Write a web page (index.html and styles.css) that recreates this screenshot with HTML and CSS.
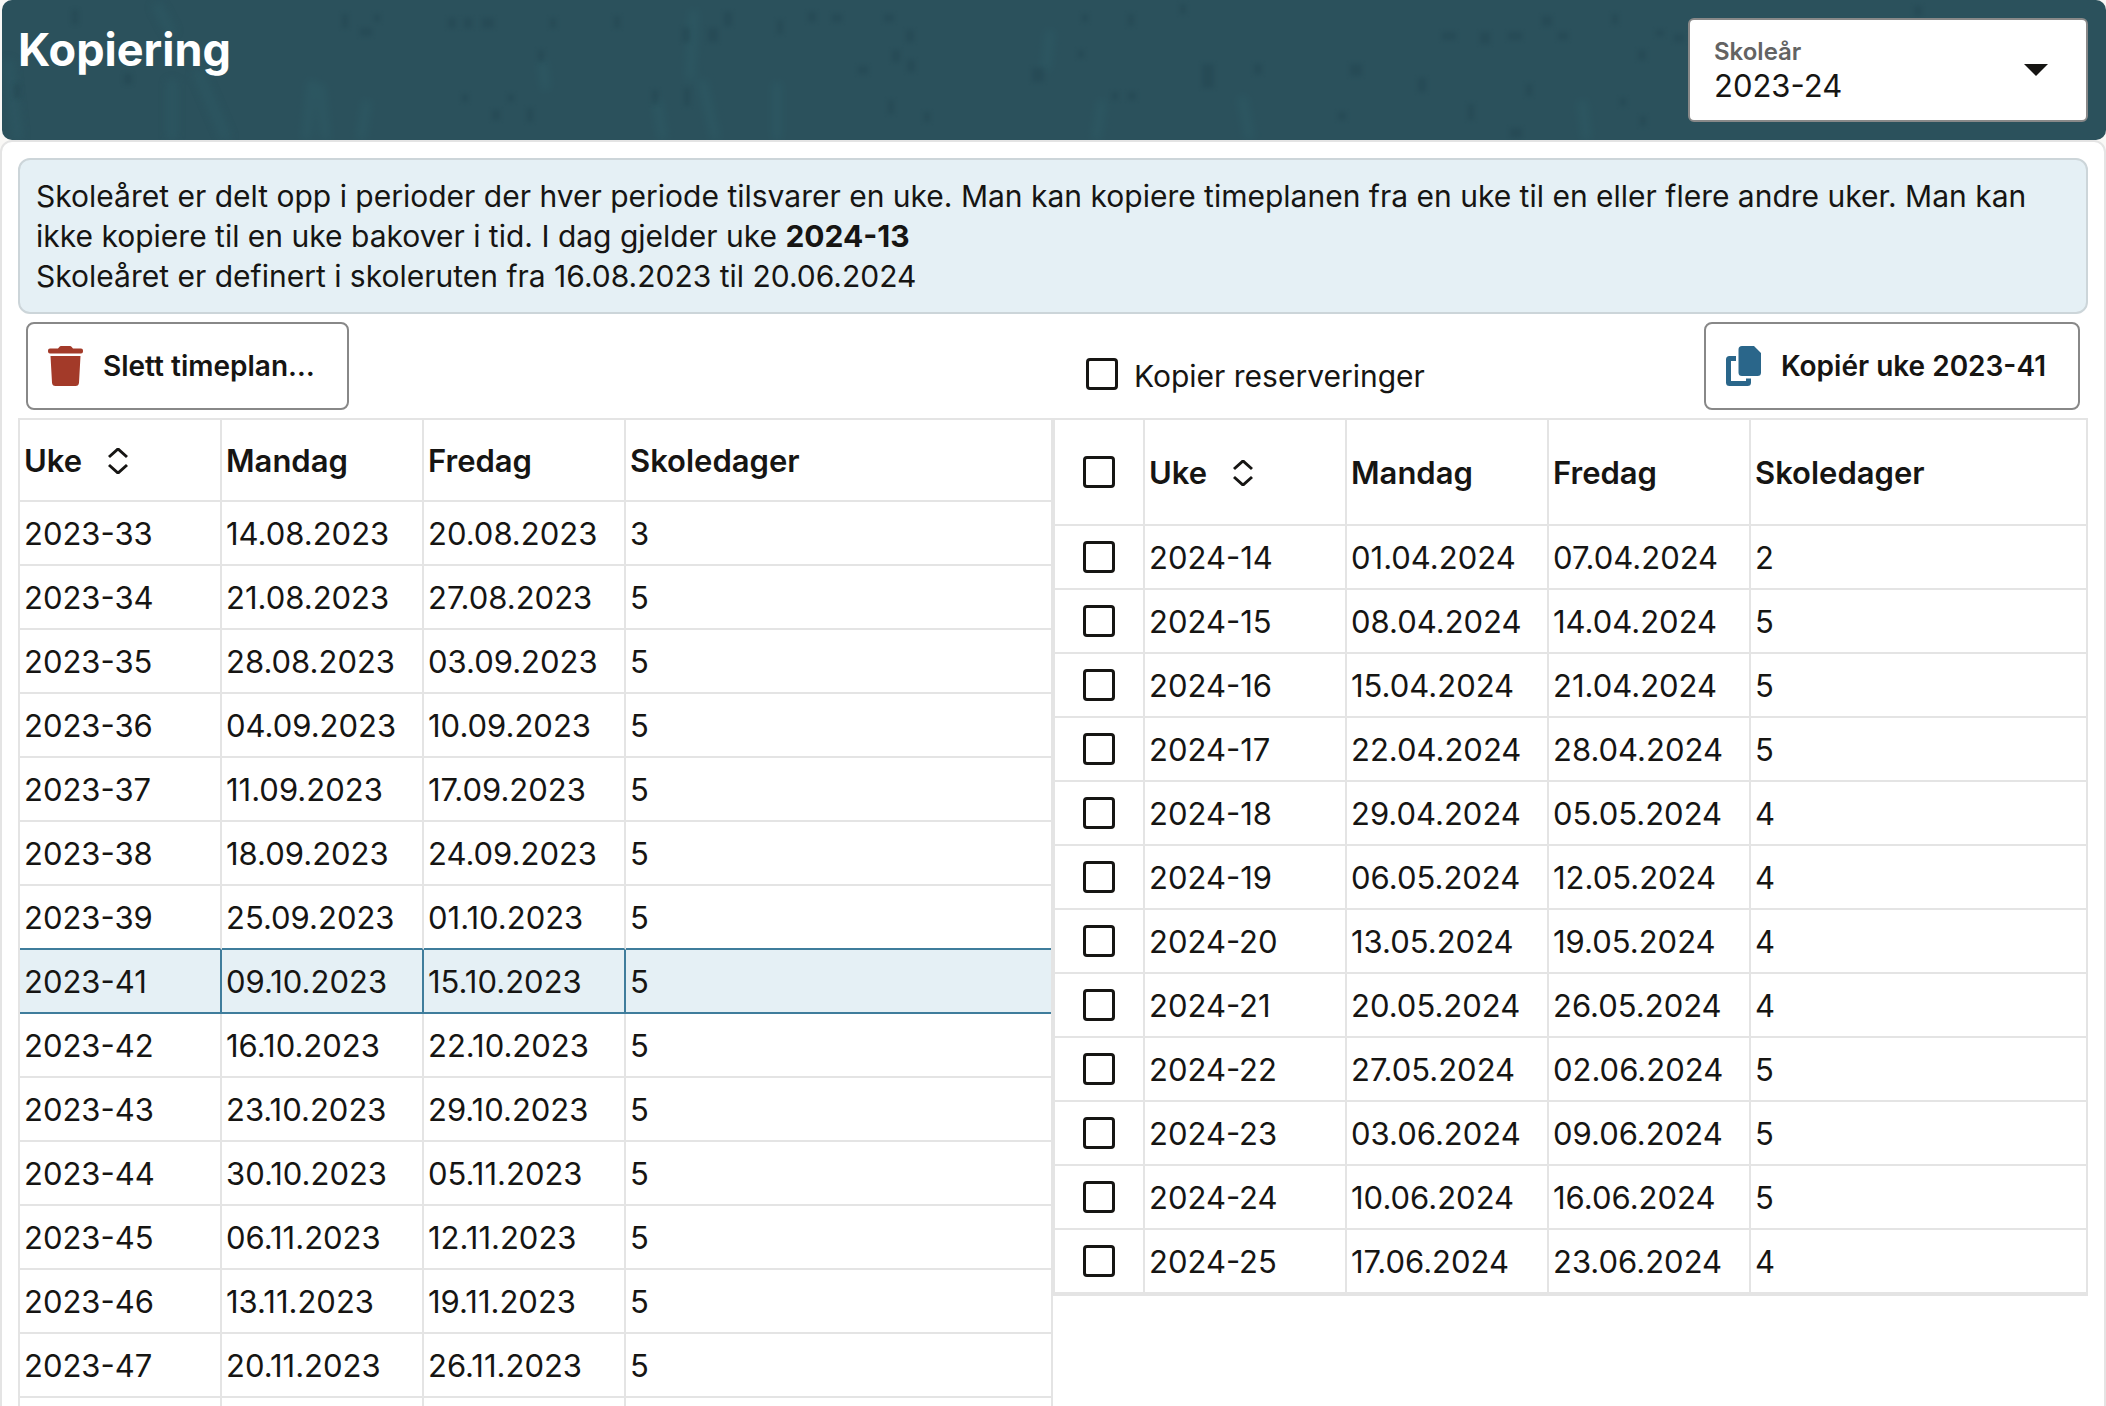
FILE: index.html
```html
<!DOCTYPE html>
<html lang="nb">
<head>
<meta charset="utf-8">
<meta name="viewport" content="width=device-width, initial-scale=1">
<title>Kopiering</title>
<link rel="stylesheet" href="styles.css">
</head>
<body>
<header class="page-header">
  <svg class="header-texture" viewBox="0 0 2104 140" preserveAspectRatio="none" aria-hidden="true">
    <g class="streaks">
      <path d="M6 60l10 80M154 4l16 30M170 80v60M195 70l30 70M310 80l-6 60M318 84l6 56M365 100l-6 40M540 60l4 30M655 100l6 40M692 10l-4 70M700 80l14 60M775 82v58M1100 100l-6 40M1240 96l8 44M1580 100l5 40M1048 30l-4 40"/>
    </g>
    <g class="specks">
      <path d="M70 10h6v14h-6zM122 74h8v10h-8zM12 84h6v14h-6zM340 14h6v14h-6zM358 28h12v8h-12zM372 14h6v8h-6zM446 18h8v10h-8zM462 18h8v10h-8zM480 18h12v10h-12zM548 18h6v10h-6zM612 16h6v12h-6zM536 50h6v12h-6zM680 28h8v14h-8zM706 28h10v14h-10zM722 12h8v14h-8zM775 20h6v14h-6zM806 12h8v10h-8zM830 14h10v8h-10zM882 14h10v8h-10zM904 30h8v12h-8zM890 50h8v12h-8zM856 66h10v8h-10zM905 60h8v12h-8zM886 100h6v14h-6zM922 112h6v10h-6zM525 108h6v14h-6zM490 110h8v10h-8zM506 94h6v8h-6zM460 94h6v8h-6zM650 90h6v14h-6zM682 88h6v18h-6zM1080 14h6v8h-6zM1126 14h6v12h-6zM1178 4h6v10h-6zM1076 50h6v8h-6zM1030 68h12v14h-12zM1110 92h6v8h-6zM1126 92h8v8h-8zM1200 64h12v24h-12zM1252 64h8v10h-8zM1348 64h12v12h-12zM1336 112h8v8h-8zM1440 32h14v8h-14zM1478 32h10v12h-10zM1506 32h14v8h-14zM1540 16h10v10h-10zM1556 32h10v8h-10zM1416 78h8v14h-8zM1524 84h6v12h-6zM1466 104h6v16h-6zM1508 128h12v10h-12zM1610 14h6v10h-6zM1654 30h8v6h-8zM1672 34h10v8h-10zM1636 50h8v10h-8zM1618 98h6v8h-6zM1638 116h6v10h-6zM1912 6h8v10h-8z"/>
    </g>
  </svg>
  <h1 class="page-title">Kopiering</h1>
  <div class="year-field">
    <label class="year-label" for="year">Skoleår</label>
    <select class="year-select" id="year"><option>2023-24</option></select>
    <svg class="year-arrow" viewBox="0 0 24 12" aria-hidden="true"><path d="M0 0h24L12 12z"/></svg>
  </div>
</header>

<main class="panel">
  <div class="info">
    <p class="info-text">Skoleåret er delt opp i perioder der hver periode tilsvarer en uke. Man kan kopiere timeplanen fra en uke til en eller flere andre uker. Man kan ikke kopiere til en uke bakover i tid. I dag gjelder uke <strong>2024-13</strong></p>
    <p class="info-text">Skoleåret er definert i skoleruten fra 16.08.2023 til 20.06.2024</p>
  </div>

  <div class="toolbar">
    <div class="toolbar-side">
      <button class="button" type="button">
        <svg class="button-icon icon-delete" viewBox="0 0 35 40" aria-hidden="true"><path d="M2 2.500H10L11.500.7Q12 0 13 0H22Q23 0 23.500.7L25 2.500H33Q35 2.500 35 4.500V5.500Q35 7.500 33 7.500H2Q0 7.500 0 5.500V4.500Q0 2.500 2 2.500ZM2.500 10H32.500L31 36.500Q30.800 40 27.500 40H7.500Q4.200 40 4 36.500Z"/></svg>
        Slett timeplan…
      </button>
    </div>
    <div class="toolbar-side toolbar-copy">
      <label class="copy-option"><input class="checkbox" type="checkbox"><span class="copy-text">Kopier reserveringer</span></label>
      <button class="button" type="button">
        <svg class="button-icon icon-copy" viewBox="0 0 35 40" aria-hidden="true"><path d="M16 0H28L35 7V26.500Q35 30 31.500 30H16Q12.500 30 12.500 26.500V3.500Q12.500 0 16 0ZM3.500 10H10V15H5V35H20V32.500H25V36.500Q25 40 21.500 40H3.500Q0 40 0 36.500V13.500Q0 10 3.500 10Z"/></svg>
        Kopiér uke 2023-41
      </button>
    </div>
  </div>

  <div class="tables">
    <div class="table-box">
      <table class="weeks">
        <colgroup><col class="col-data"><col class="col-data"><col class="col-data"><col></colgroup>
        <thead>
          <tr><th scope="col"><button class="sort" type="button">Uke<svg class="sort-icon" viewBox="0 0 20 26" aria-hidden="true"><path d="M1 9l9-8 9 8M1 17l9 8 9-8"/></svg></button></th><th scope="col">Mandag</th><th scope="col">Fredag</th><th scope="col">Skoledager</th></tr>
        </thead>
        <tbody>
          <tr><td>2023-33</td><td>14.08.2023</td><td>20.08.2023</td><td>3</td></tr>
          <tr><td>2023-34</td><td>21.08.2023</td><td>27.08.2023</td><td>5</td></tr>
          <tr><td>2023-35</td><td>28.08.2023</td><td>03.09.2023</td><td>5</td></tr>
          <tr><td>2023-36</td><td>04.09.2023</td><td>10.09.2023</td><td>5</td></tr>
          <tr><td>2023-37</td><td>11.09.2023</td><td>17.09.2023</td><td>5</td></tr>
          <tr><td>2023-38</td><td>18.09.2023</td><td>24.09.2023</td><td>5</td></tr>
          <tr><td>2023-39</td><td>25.09.2023</td><td>01.10.2023</td><td>5</td></tr>
          <tr class="is-selected"><td>2023-41</td><td>09.10.2023</td><td>15.10.2023</td><td>5</td></tr>
          <tr><td>2023-42</td><td>16.10.2023</td><td>22.10.2023</td><td>5</td></tr>
          <tr><td>2023-43</td><td>23.10.2023</td><td>29.10.2023</td><td>5</td></tr>
          <tr><td>2023-44</td><td>30.10.2023</td><td>05.11.2023</td><td>5</td></tr>
          <tr><td>2023-45</td><td>06.11.2023</td><td>12.11.2023</td><td>5</td></tr>
          <tr><td>2023-46</td><td>13.11.2023</td><td>19.11.2023</td><td>5</td></tr>
          <tr><td>2023-47</td><td>20.11.2023</td><td>26.11.2023</td><td>5</td></tr>
          <tr><td></td><td></td><td></td><td></td></tr>
        </tbody>
      </table>
    </div>
    <div class="table-box">
      <table class="weeks weeks-target">
        <colgroup><col class="col-check"><col class="col-data"><col class="col-data"><col class="col-data"><col></colgroup>
        <thead>
          <tr><th scope="col"><input class="checkbox" type="checkbox" aria-label="Velg alle"></th><th scope="col"><button class="sort" type="button">Uke<svg class="sort-icon" viewBox="0 0 20 26" aria-hidden="true"><path d="M1 9l9-8 9 8M1 17l9 8 9-8"/></svg></button></th><th scope="col">Mandag</th><th scope="col">Fredag</th><th scope="col">Skoledager</th></tr>
        </thead>
        <tbody>
          <tr><td><input class="checkbox" type="checkbox" aria-labelledby="w14"></td><td id="w14">2024-14</td><td>01.04.2024</td><td>07.04.2024</td><td>2</td></tr>
          <tr><td><input class="checkbox" type="checkbox" aria-labelledby="w15"></td><td id="w15">2024-15</td><td>08.04.2024</td><td>14.04.2024</td><td>5</td></tr>
          <tr><td><input class="checkbox" type="checkbox" aria-labelledby="w16"></td><td id="w16">2024-16</td><td>15.04.2024</td><td>21.04.2024</td><td>5</td></tr>
          <tr><td><input class="checkbox" type="checkbox" aria-labelledby="w17"></td><td id="w17">2024-17</td><td>22.04.2024</td><td>28.04.2024</td><td>5</td></tr>
          <tr><td><input class="checkbox" type="checkbox" aria-labelledby="w18"></td><td id="w18">2024-18</td><td>29.04.2024</td><td>05.05.2024</td><td>4</td></tr>
          <tr><td><input class="checkbox" type="checkbox" aria-labelledby="w19"></td><td id="w19">2024-19</td><td>06.05.2024</td><td>12.05.2024</td><td>4</td></tr>
          <tr><td><input class="checkbox" type="checkbox" aria-labelledby="w20"></td><td id="w20">2024-20</td><td>13.05.2024</td><td>19.05.2024</td><td>4</td></tr>
          <tr><td><input class="checkbox" type="checkbox" aria-labelledby="w21"></td><td id="w21">2024-21</td><td>20.05.2024</td><td>26.05.2024</td><td>4</td></tr>
          <tr><td><input class="checkbox" type="checkbox" aria-labelledby="w22"></td><td id="w22">2024-22</td><td>27.05.2024</td><td>02.06.2024</td><td>5</td></tr>
          <tr><td><input class="checkbox" type="checkbox" aria-labelledby="w23"></td><td id="w23">2024-23</td><td>03.06.2024</td><td>09.06.2024</td><td>5</td></tr>
          <tr><td><input class="checkbox" type="checkbox" aria-labelledby="w24"></td><td id="w24">2024-24</td><td>10.06.2024</td><td>16.06.2024</td><td>5</td></tr>
          <tr><td><input class="checkbox" type="checkbox" aria-labelledby="w25"></td><td id="w25">2024-25</td><td>17.06.2024</td><td>23.06.2024</td><td>4</td></tr>
        </tbody>
      </table>
    </div>
  </div>
</main>
</body>
</html>
```
FILE: styles.css
```css
* { box-sizing: border-box; }

body {
  margin: 0;
  background: #f9f8f6;
  color: #161513;
  font: 400 31px/40px Inter, "Liberation Sans", sans-serif;
}

button, select, input {
  font: inherit;
  color: inherit;
  margin: 0;
}

.page-header {
  position: relative;
  display: flex;
  justify-content: space-between;
  align-items: flex-start;
  min-height: 140px;
  margin-left: 2px;
  padding: 18px 18px 18px 16px;
  border-radius: 10px;
  background: #2b515c;
  overflow: hidden;
}

.header-texture {
  position: absolute;
  inset: 0;
  width: 100%;
  height: 100%;
}

.streaks { fill: none; stroke: #2f5f69; stroke-width: 10; opacity: 0.4; filter: blur(4px); }
.specks { fill: #234651; opacity: 0.5; filter: blur(2px); }

.page-title {
  position: relative;
  margin: 0;
  color: #fff;
  font-size: 45px;
  font-weight: 700;
  line-height: 64px;
}

.year-field {
  position: relative;
  width: 400px;
  height: 104px;
}

.year-label {
  position: absolute;
  top: 18px;
  left: 26px;
  color: #636363;
  font-size: 24px;
  font-weight: 600;
  line-height: 32px;
}

.year-select {
  width: 100%;
  height: 100%;
  padding: 32px 64px 0 24px;
  border: 2px solid #888;
  border-radius: 6px;
  background: #fff;
  appearance: none;
}

.year-arrow {
  position: absolute;
  top: 46px;
  right: 40px;
  width: 24px;
  height: 12px;
  fill: #161513;
  pointer-events: none;
}

.panel {
  padding: 16px 16px 0;
  border: 2px solid #e4e4e4;
  border-radius: 12px;
  background: #fff;
}

.info {
  padding: 16px;
  border: 2px solid #ccd5d9;
  border-radius: 12px;
  background: #e5f0f5;
  font-size: 30px;
}

.info-text { margin: 0; }

.toolbar {
  display: grid;
  grid-template-columns: 1fr 1fr;
  padding: 8px;
}

.toolbar-side { display: flex; }
.toolbar-copy { justify-content: space-between; align-items: center; padding-left: 33px; }

.button {
  display: flex;
  align-items: center;
  gap: 20px;
  height: 88px;
  padding: 0 32px 0 20px;
  border: 2px solid #888;
  border-radius: 8px;
  background: #fff;
  font-size: 28px;
  font-weight: 600;
}

.button-icon { width: 35px; height: 40px; }
.icon-delete { fill: #a33a29; }
.icon-copy { fill: #2a668a; }

.copy-option {
  display: flex;
  align-items: center;
  gap: 16px;
  padding-top: 16px;
  font-size: 30px;
}

.copy-text { padding-top: 4px; line-height: 36px; }

.checkbox {
  display: block;
  flex: none;
  width: 32px;
  height: 32px;
  border: 3px solid #161513;
  border-radius: 4px;
  background: #fff;
  appearance: none;
}

.tables { display: flex; align-items: flex-start; }

.table-box {
  flex: 1;
  min-width: 0;
  border: 2px solid #e4e4e4;
}

.weeks {
  width: 100%;
  table-layout: fixed;
  border-collapse: separate;
  border-spacing: 0;
}

.col-data { width: 202px; }
.col-check { width: 90px; }

.weeks th, .weeks td {
  height: 64px;
  padding: 2px 4px 0;
  border: solid #e4e4e4;
  border-width: 0 2px 2px 0;
  text-align: left;
}

.weeks th { height: 82px; font-weight: 600; }
.weeks-target th { height: 106px; }
.weeks th:last-child, .weeks td:last-child { border-right: 0; }
.weeks-target tr > :first-child { padding: 0; }
.weeks .checkbox { margin: 0 auto; }

.weeks tr:has(+ .is-selected) td { border-bottom-color: #3f7d9c; }
.weeks .is-selected td { border-color: #3f7d9c; background: #e5f0f5; }

.sort {
  display: flex;
  align-items: center;
  gap: 26px;
  padding: 0;
  border: 0;
  background: none;
}

.sort-icon {
  width: 20px;
  height: 26px;
  fill: none;
  stroke: #161513;
  stroke-width: 3;
}
```
